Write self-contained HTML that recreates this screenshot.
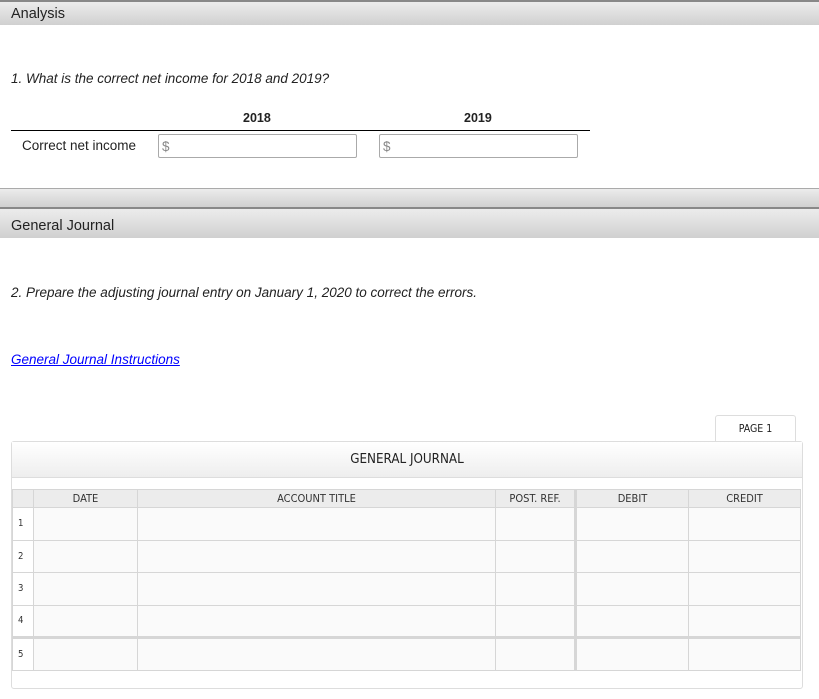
<!DOCTYPE html>
<html><head><style>
*{margin:0;padding:0;box-sizing:border-box}
body{width:819px;height:699px;background:#fff;font-family:"Liberation Sans",Arial,sans-serif;position:relative;overflow:hidden;color:#222}
.bar{position:absolute;left:0;width:819px;background:linear-gradient(#ececec,#d0d0d0);border-top:2px solid #888;font-size:14.5px;padding-left:11px}
.abs{position:absolute}
.inp{position:absolute;height:24px;border:1px solid #aaa;border-radius:2px;font-size:13.5px;color:#888;padding:4px 0 0 3px;top:134px}
.jf{font-family:"DejaVu Sans Condensed","DejaVu Sans",sans-serif}
table{border-collapse:collapse;position:absolute;left:12px;top:489px}
td{border:1px solid #d6d6d6;background:#fafafa;height:32.5px;padding:0}
tr.h td{background:#ececec;height:18px;font-size:11px;text-align:center;color:#333}
td.n{background:#fff;font-size:9.5px;padding-left:5px;color:#333}
</style></head><body>
<div class="bar" style="top:0;height:25px;padding-top:4px">Analysis</div>
<div class="abs" style="left:11px;top:71px;font-size:13.5px;font-style:italic">1. What is the correct net income for 2018 and 2019?</div>
<div class="abs" style="left:243px;top:111px;font-size:12.5px;font-weight:bold">2018</div>
<div class="abs" style="left:464px;top:111px;font-size:12.5px;font-weight:bold">2019</div>
<div class="abs" style="left:11px;top:130px;width:579px;height:1px;background:#000"></div>
<div class="abs" style="left:22px;top:138px;font-size:13.5px">Correct net income</div>
<div class="inp" style="left:158px;width:199px">$</div>
<div class="inp" style="left:379px;width:199px">$</div>
<div class="bar" style="top:188px;height:19px;border-top:1px solid #aaa"></div>
<div class="bar" style="top:207px;height:31px;padding-top:9px">General Journal</div>
<div class="abs" style="left:11px;top:285px;font-size:13.5px;font-style:italic">2. Prepare the adjusting journal entry on January 1, 2020 to correct the errors.</div>
<div class="abs" style="left:11px;top:352px;font-size:13.5px;font-style:italic;color:#00f;text-decoration:underline">General Journal Instructions</div>
<div class="abs jf" style="left:715px;top:415px;width:81px;height:27px;border:1px solid #ddd;border-bottom:none;border-radius:3px 3px 0 0;background:#fff;font-size:10.5px;text-align:center;padding-top:7px">PAGE 1</div>
<div class="abs" style="left:11px;top:441px;width:792px;height:248px;border:1px solid #ddd;border-radius:3px;background:#fff"></div>
<div class="abs jf" style="left:12px;top:442px;width:790px;height:36px;background:linear-gradient(#fff,#eee);border-bottom:1px solid #ddd;font-size:13.3px;text-align:center;padding-top:10px;color:#222">GENERAL JOURNAL</div>
<table class="jf">
<tr class="h"><td style="width:21px"></td><td style="width:104px">DATE</td><td style="width:358px">ACCOUNT TITLE</td><td style="width:80px;border-right:3px solid #d6d6d6">POST. REF.</td><td style="width:113px">DEBIT</td><td style="width:112px">CREDIT</td></tr>
<tr><td class="n">1</td><td></td><td></td><td style="border-right:3px solid #d6d6d6"></td><td></td><td></td></tr>
<tr><td class="n">2</td><td></td><td></td><td style="border-right:3px solid #d6d6d6"></td><td></td><td></td></tr>
<tr><td class="n">3</td><td></td><td></td><td style="border-right:3px solid #d6d6d6"></td><td></td><td></td></tr>
<tr><td class="n">4</td><td></td><td></td><td style="border-right:3px solid #d6d6d6"></td><td></td><td></td></tr>
<tr style="border-top:3px solid #d6d6d6"><td class="n">5</td><td></td><td></td><td style="border-right:3px solid #d6d6d6"></td><td></td><td></td></tr>
</table>
</body></html>
